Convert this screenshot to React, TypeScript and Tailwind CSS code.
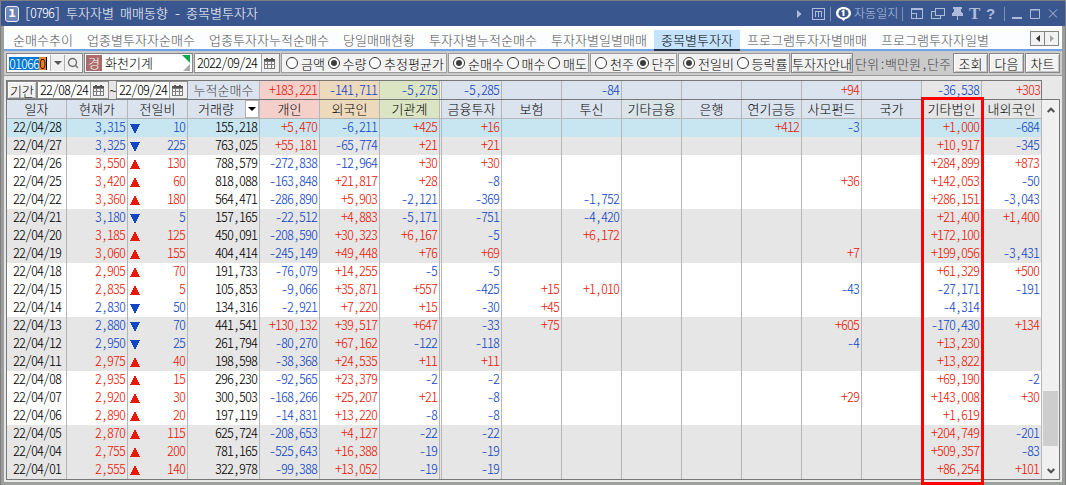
import type { ReactNode } from "react";
import clsx from "clsx";
import { Search } from "lucide-react";

type Row = {
  date: string;
  price: string;
  dir: "up" | "down";
  change: string;
  volume: string;
  flows: string[];
};

const TABS = [
  "순매수추이",
  "업종별투자자순매수",
  "업종투자자누적순매수",
  "당일매매현황",
  "투자자별누적순매수",
  "투자자별일별매매",
  "종목별투자자",
  "프로그램투자자별매매",
  "프로그램투자자일별",
];

const RADIO_GROUPS = [
  { name: "unit", width: "w-[166px]", options: ["금액", "수량", "추정평균가"], selected: "수량" },
  { name: "side", width: "w-[141px]", options: ["순매수", "매수", "매도"], selected: "순매수" },
  { name: "lot", width: "w-[87px]", options: ["천주", "단주"], selected: "단주" },
  { name: "diff", width: "w-[112px]", options: ["전일비", "등락률"], selected: "전일비" },
];

const INVESTORS = [
  { label: "개인", total: "+183,221", top: "bg-[#f5cfca]", head: "bg-[#f5cfca]" },
  { label: "외국인", total: "-141,711", top: "bg-[#eddabd]", head: "bg-[#eddabd]" },
  { label: "기관계", total: "-5,275", top: "bg-[#dbe5c4]", head: "bg-[#dbe5c4]" },
  { label: "금융투자", total: "-5,285", top: "bg-[#dbe3ee]", head: "bg-[#dbe3ee]" },
  { label: "보험", total: "", top: "bg-[#dbe3ee]", head: "bg-[#dbe3ee]" },
  { label: "투신", total: "-84", top: "bg-[#dbe3ee]", head: "bg-[#dbe3ee]" },
  { label: "기타금융", total: "", top: "bg-[#dbe3ee]", head: "bg-[#dae5ea]" },
  { label: "은행", total: "", top: "bg-[#dbe3ee]", head: "bg-[#dbe3ee]" },
  { label: "연기금등", total: "", top: "bg-[#dbe3ee]", head: "bg-[#dbe3ee]" },
  { label: "사모펀드", total: "+94", top: "bg-[#dbe3ee]", head: "bg-[#dbe3ee]" },
  { label: "국가", total: "", top: "bg-[#dbe3ee]", head: "bg-[#dbe3ee]" },
  { label: "기타법인", total: "-36,538", top: "bg-[#e6e6e6]", head: "bg-[#e6e6e6]" },
  { label: "내외국인", total: "+303", top: "bg-[#e6e6e6]", head: "bg-[#e6e6e6]" },
];

const ROWS: Row[] = [
  { date: "22/04/28", price: "3,315", dir: "down", change: "10", volume: "155,218", flows: ["+5,470", "-6,211", "+425", "+16", "", "", "", "", "+412", "-3", "", "+1,000", "-684"] },
  { date: "22/04/27", price: "3,325", dir: "down", change: "225", volume: "763,025", flows: ["+55,181", "-65,774", "+21", "+21", "", "", "", "", "", "", "", "+10,917", "-345"] },
  { date: "22/04/26", price: "3,550", dir: "up", change: "130", volume: "788,579", flows: ["-272,838", "-12,964", "+30", "+30", "", "", "", "", "", "", "", "+284,899", "+873"] },
  { date: "22/04/25", price: "3,420", dir: "up", change: "60", volume: "818,088", flows: ["-163,848", "+21,817", "+28", "-8", "", "", "", "", "", "+36", "", "+142,053", "-50"] },
  { date: "22/04/22", price: "3,360", dir: "up", change: "180", volume: "564,471", flows: ["-286,890", "+5,903", "-2,121", "-369", "", "-1,752", "", "", "", "", "", "+286,151", "-3,043"] },
  { date: "22/04/21", price: "3,180", dir: "down", change: "5", volume: "157,165", flows: ["-22,512", "+4,883", "-5,171", "-751", "", "-4,420", "", "", "", "", "", "+21,400", "+1,400"] },
  { date: "22/04/20", price: "3,185", dir: "up", change: "125", volume: "450,091", flows: ["-208,590", "+30,323", "+6,167", "-5", "", "+6,172", "", "", "", "", "", "+172,100", ""] },
  { date: "22/04/19", price: "3,060", dir: "up", change: "155", volume: "404,414", flows: ["-245,149", "+49,448", "+76", "+69", "", "", "", "", "", "+7", "", "+199,056", "-3,431"] },
  { date: "22/04/18", price: "2,905", dir: "up", change: "70", volume: "191,733", flows: ["-76,079", "+14,255", "-5", "-5", "", "", "", "", "", "", "", "+61,329", "+500"] },
  { date: "22/04/15", price: "2,835", dir: "up", change: "5", volume: "105,853", flows: ["-9,066", "+35,871", "+557", "-425", "+15", "+1,010", "", "", "", "-43", "", "-27,171", "-191"] },
  { date: "22/04/14", price: "2,830", dir: "down", change: "50", volume: "134,316", flows: ["-2,921", "+7,220", "+15", "-30", "+45", "", "", "", "", "", "", "-4,314", ""] },
  { date: "22/04/13", price: "2,880", dir: "down", change: "70", volume: "441,541", flows: ["+130,132", "+39,517", "+647", "-33", "+75", "", "", "", "", "+605", "", "-170,430", "+134"] },
  { date: "22/04/12", price: "2,950", dir: "down", change: "25", volume: "261,794", flows: ["-80,270", "+67,162", "-122", "-118", "", "", "", "", "", "-4", "", "+13,230", ""] },
  { date: "22/04/11", price: "2,975", dir: "up", change: "40", volume: "198,598", flows: ["-38,368", "+24,535", "+11", "+11", "", "", "", "", "", "", "", "+13,822", ""] },
  { date: "22/04/08", price: "2,935", dir: "up", change: "15", volume: "296,230", flows: ["-92,565", "+23,379", "-2", "-2", "", "", "", "", "", "", "", "+69,190", "-2"] },
  { date: "22/04/07", price: "2,920", dir: "up", change: "30", volume: "300,503", flows: ["-168,266", "+25,207", "+21", "-8", "", "", "", "", "", "+29", "", "+143,008", "+30"] },
  { date: "22/04/06", price: "2,890", dir: "up", change: "20", volume: "197,119", flows: ["-14,831", "+13,220", "-8", "-8", "", "", "", "", "", "", "", "+1,619", ""] },
  { date: "22/04/05", price: "2,870", dir: "up", change: "115", volume: "625,724", flows: ["-208,653", "+4,127", "-22", "-22", "", "", "", "", "", "", "", "+204,749", "-201"] },
  { date: "22/04/04", price: "2,755", dir: "up", change: "200", volume: "781,165", flows: ["-525,643", "+16,388", "-19", "-19", "", "", "", "", "", "", "", "+509,357", "-83"] },
  { date: "22/04/01", price: "2,555", dir: "up", change: "140", volume: "322,978", flows: ["-99,388", "+13,052", "-19", "-19", "", "", "", "", "", "", "", "+86,254", "+101"] },
];

function signColor(value: string) {
  return value.startsWith("-") ? "text-[#1246c4]" : "text-[#e8190a]";
}

function rowColor(i: number) {
  if (i === 0) return "bg-[#c8e6f2]";
  return Math.floor((i + 1) / 3) % 2 === 0 ? "bg-[#e6e6e6]" : "bg-white";
}

// half-width figures, 6px per character
function Num({ children, className }: { children: ReactNode; className?: string }) {
  return (
    <span className={clsx("text-[14px] leading-[17px] tracking-[-1px] whitespace-pre [font-feature-settings:'hwid']", className)}>
      {children}
    </span>
  );
}

function Cell({ children, className }: { children?: ReactNode; className?: string }) {
  return (
    <div className={clsx("flex shrink-0 items-center border-r border-[#b6b6b6]", className)}>
      {children}
    </div>
  );
}

function Calendar() {
  return (
    <svg className="mr-0.5" width="11" height="11" viewBox="0 0 11 11" shapeRendering="crispEdges">
      <path d="M0 1h11v10H0z" fill="#7c7c7c" />
      <path d="M0 1h11v2H0zM2 0h2v2H2zM7 0h2v2H7z" fill="#555" />
      <path d="M1 4h2v2H1zM4 4h3v2H4zM8 4h2v2H8zM1 7h2v3H1zM4 7h3v3H4zM8 7h2v3H8z" fill="#f4f4f4" />
    </svg>
  );
}

function DateBox({ value, className }: { value: string; className: string }) {
  return (
    <div className={clsx("flex border border-[#8c8c8c] bg-white", className)}>
      <div className="flex flex-1 items-center pl-0.5">
        <Num className="pb-0.5">{value}</Num>
      </div>
      <button className="flex w-[18px] items-center justify-center border-l border-[#a0a0a0] bg-[#f0f0f0]">
        <Calendar />
      </button>
    </div>
  );
}

function Radio({ label, checked }: { label: string; checked: boolean }) {
  return (
    <label className="flex items-center gap-[3px] whitespace-nowrap">
      <span className="flex size-3 items-center justify-center rounded-full border border-[#333] bg-white">
        {checked && <span className="size-1.5 rounded-full bg-[#3c3c3c]" />}
      </span>
      {label}
    </label>
  );
}

function ToolButton({ children, className }: { children: ReactNode; className: string }) {
  return (
    <button className={clsx("flex items-center justify-center border border-[#868686] bg-[#f2f2f2] whitespace-nowrap shadow-[inset_1px_1px_0_#fff,inset_-1px_-1px_0_#c4c4c4]", className)}>
      {children}
    </button>
  );
}

function TitleBar() {
  return (
    <div className="flex h-[25px] items-center bg-[#3a568f] pl-1 text-white">
      <span className="flex h-4 w-3.5 items-center justify-center rounded-[3px] border border-[#eef2fa] bg-[#7085b9] font-['DejaVu_Sans'] text-[11px] leading-none font-bold">
        1
      </span>
      <div className="ml-[5px] flex gap-1.5 pb-0.5">
        <Num>[0796]</Num>
        <span>투자자별</span>
        <span>매매동향</span>
        <Num>-</Num>
        <span>종목별투자자</span>
      </div>
      <svg className="ml-auto" width="5" height="8" viewBox="0 0 5 8">
        <path d="M0 0l4.5 4L0 8z" fill="#aebcdb" />
      </svg>
      <svg className="ml-2.5" width="13" height="12" viewBox="0 0 13 12" fill="none" stroke="#aebcdb" shapeRendering="crispEdges">
        <path d="M.5.5h12v11H.5zM3.5 9V3.5h6V9M6.5 4v5" />
      </svg>
      <span className="ml-[5px] h-3.5 w-px bg-[#8290b0]" />
      <svg className="ml-[5px]" width="15" height="14" viewBox="0 0 15 14">
        <path d="M7.5 0C3.400 0 0 2.600 0 6s2.500 5.500 5.500 6l2 2 2-2C12.500 11.500 15 9.400 15 6S11.600 0 7.500 0z" fill="#fff" />
        <ellipse cx="7.500" cy="6.200" rx="5" ry="4.300" fill="#3a568f" />
        <path d="M5.500 4l2-1.500H8.500V9h-2V5h-1z" fill="#fff" />
      </svg>
      <span className="ml-[3px] w-[43px] pb-0.5 text-[12px] whitespace-nowrap text-[#b8c5e2]">자동일지</span>
      <span className="ml-[5px] h-3.5 w-px bg-[#8290b0]" />
      <svg className="ml-2" width="12" height="11" viewBox="0 0 12 11" fill="none" stroke="#aebcdb" shapeRendering="crispEdges">
        <path d="M.5 5V.5h11v10H6" />
        <path d="M.5 5.500h5v5h-5z" />
        <path d="M0 1h12" strokeWidth="2" />
      </svg>
      <svg className="ml-2" width="14" height="12" viewBox="0 0 14 12" fill="none" stroke="#aebcdb" shapeRendering="crispEdges">
        <path d="M4.500.5h9v7h-9zM4 3.500H.5v7h9V8" />
      </svg>
      <svg className="ml-[7px]" width="11" height="13" viewBox="0 0 11 13" fill="#aebcdb" shapeRendering="crispEdges">
        <path d="M1 0h9v2H9v3h1v1h1v3H6v4H5V9H0V6h1V5h1V2H1z" />
      </svg>
      <span className="ml-[6px] w-[11px] text-center font-['Liberation_Serif'] text-[17px] leading-none font-bold text-[#aebcdb]">T</span>
      <span className="ml-[6px] w-[9px] text-center font-['Liberation_Sans'] text-[15px] leading-none font-bold text-[#aebcdb]">?</span>
      <span className="ml-[9px] h-3.5 w-px bg-[#8290b0]" />
      <svg className="ml-[7px] mr-1.5" width="47" height="11" viewBox="0 0 47 11" fill="none" stroke="#aebcdb">
        <path d="M0 10h10" strokeWidth="2" />
        <path d="M18.500 1.500h9v9h-9zM18 2h10" />
        <path d="M37 1.500l8 8M45 1.500l-8 8" />
      </svg>
    </div>
  );
}

function Toolbar() {
  return (
    <div className="flex h-[25px] items-start border-b border-[#9a9a9a] bg-[#cbcbcb] pt-0.5 pl-0.5">
      <div className="flex h-5 w-[77px] border border-[#868686] bg-white p-px">
        <div className="flex w-[42px] items-center pl-px">
          <Num className="h-[13px] bg-[#0078d7] leading-[13px]! text-white">01066</Num>
          <Num className="h-[13px] w-2 border-r border-black bg-[#f58220] leading-[13px]! text-black">0</Num>
        </div>
        <button className="flex w-[14px] items-center justify-center border-l border-[#b0b0b0] bg-[#f0f0f0]">
          <svg width="8" height="4" viewBox="0 0 8 4"><path d="M0 0h8L4 4z" fill="#555" /></svg>
        </button>
        <button className="flex w-[17px] items-center justify-center border-l border-[#b0b0b0] bg-[#f0f0f0]">
          <Search size={12} strokeWidth={2.8} color="#707070" />
        </button>
      </div>
      <div className="relative ml-px flex h-5 w-[109px] items-center border border-[#868686] bg-white pl-px">
        <span className="flex size-4 items-center justify-center bg-[#ab6b6b] pb-0.5 text-white">경</span>
        <span className="ml-[3px] pb-0.5">화천기계</span>
        <svg className="absolute top-px right-0.5" width="8" height="16" viewBox="0 0 8 16">
          <path d="M0 0h8v8z" fill="#12a84e" />
          <path d="M8 9v7H1z" fill="#aaa" />
        </svg>
      </div>
      <DateBox value="2022/09/24" className="ml-px h-5 w-[86px]" />
      {RADIO_GROUPS.map((g) => (
        <div key={g.name} className={clsx("ml-px flex h-5 items-center gap-[2.5px] border border-[#9c9c9c] bg-[#f2f2f2] pl-1", g.width)}>
          {g.options.map((o) => (
            <Radio key={o} label={o} checked={o === g.selected} />
          ))}
        </div>
      ))}
      <ToolButton className="ml-px h-5 w-[62px]">투자자안내</ToolButton>
      <span className="ml-0.5 flex h-5 w-[98px] items-center whitespace-nowrap text-[#444]">
        단위<Num className="w-1.5 text-center">:</Num>백만원<Num className="w-1.5 text-center">,</Num>단주
      </span>
      <ToolButton className="h-5 w-[35px]">조회</ToolButton>
      <ToolButton className="ml-px h-5 w-[35px]">다음</ToolButton>
      <ToolButton className="ml-px h-5 w-[35px]">차트</ToolButton>
    </div>
  );
}

function SummaryRow() {
  return (
    <div className="flex h-[19px] w-[1036px] border-t border-r border-l border-[#777]">
      <div className="flex w-[181px] shrink-0 items-stretch bg-[#e6e6e6]">
        <ToolButton className="w-[30px]">기간</ToolButton>
        <DateBox value="22/08/24" className="w-[72px]" />
        <span className="flex w-[7px] items-center justify-center"><Num>~</Num></span>
        <DateBox value="22/09/24" className="w-[72px]" />
      </div>
      <Cell className="w-[72px] justify-center bg-[#dbe3ee] pb-0.5 text-[#444]">누적순매수</Cell>
      {INVESTORS.map((c, i) => (
        <div key={c.label} className="flex shrink-0">
          <Cell className={clsx("justify-end", i === 12 ? "w-[59px] border-r-0 pr-px" : "w-[60px] pr-0.5", c.top)}>
            <Num className={clsx("pb-0.5", signColor(c.total))}>{c.total}</Num>
          </Cell>
          {i === 2 && <Cell className="w-0.5 bg-[#f2f2f2]" />}
        </div>
      ))}
    </div>
  );
}

function HeaderRow() {
  return (
    <div className="flex h-[19px] border-b border-[#b6b6b6]">
      <Cell className="w-[60px] justify-center bg-[#dbe3ee] pb-0.5">일자</Cell>
      <Cell className="w-[61px] justify-center bg-[#dbe3ee] pb-0.5">현재가</Cell>
      <Cell className="w-[60px] justify-center bg-[#dbe3ee] pb-0.5">전일비</Cell>
      <Cell className="w-[72px] bg-[#dbe3ee] pl-[10px]">
        <span className="w-9 pb-0.5 whitespace-nowrap">거래량</span>
        <span className="ml-auto flex h-full w-[14px] items-center justify-center border border-[#b0b0b0] bg-white">
          <svg width="8" height="4" viewBox="0 0 8 4"><path d="M0 0h8L4 4z" fill="#000" /></svg>
        </span>
      </Cell>
      {INVESTORS.map((c, i) => (
        <div key={c.label} className="flex shrink-0">
          <Cell className={clsx("w-[60px] justify-center pb-0.5 whitespace-nowrap", c.head)}>{c.label}</Cell>
          {i === 2 && <Cell className="w-0.5 bg-[#f2f2f2]" />}
        </div>
      ))}
    </div>
  );
}

function DataRow({ row, index }: { row: Row; index: number }) {
  const tone = row.dir === "up" ? "text-[#e8190a]" : "text-[#1246c4]";
  return (
    <div className={clsx("flex h-[18px]", rowColor(index))}>
      <Cell className="w-[60px] pl-1.5"><Num className="pb-1">{row.date}</Num></Cell>
      <Cell className={clsx("w-[61px] justify-end pr-0.5", tone)}><Num className="pb-1">{row.price}</Num></Cell>
      <Cell className={clsx("w-[60px] justify-between pr-0.5 pl-0.5", tone)}>
        <svg width="10" height="9" viewBox="0 0 10 9" fill="currentColor" shapeRendering="crispEdges">
          <path d={row.dir === "up" ? "M4 0h2v2h1v2h1v2h1v2h1v1H0V8h1V6h1V4h1V2h1z" : "M0 0h10v1H9v2H8v2H7v2H6v2H4V7H3V5H2V3H1V1H0z"} />
        </svg>
        <Num className="pb-1">{row.change}</Num>
      </Cell>
      <Cell className="w-[72px] justify-end pr-0.5"><Num className="pb-1">{row.volume}</Num></Cell>
      {row.flows.map((v, i) => (
        <div key={i} className="flex shrink-0">
          <Cell className="w-[60px] justify-end pr-0.5">
            <Num className={clsx("pb-1", signColor(v))}>{v}</Num>
          </Cell>
          {i === 2 && <Cell className="w-0.5" />}
        </div>
      ))}
    </div>
  );
}

function Scrollbar() {
  return (
    <div className="flex flex-1 flex-col items-center bg-[#f0f0f0]">
      <svg className="mt-[7px]" width="8" height="6" viewBox="0 0 8 6" fill="none" stroke="#505050" strokeWidth="2">
        <path d="M.7 5L4 1.700 7.300 5" />
      </svg>
      <div className="mt-[278px] h-[55px] w-[15px] bg-[#cdcdcd]" />
      <svg className="mt-[22px]" width="8" height="6" viewBox="0 0 8 6" fill="none" stroke="#505050" strokeWidth="2">
        <path d="M.7 1L4 4.300 7.300 1" />
      </svg>
    </div>
  );
}

export default function App() {
  return (
    <div className="relative h-[485px] w-[1066px] overflow-hidden border border-b-0 border-[#7f7f7f] bg-[#9c9e9c] font-['Noto_Sans_CJK_KR',sans-serif] text-[13px] leading-[17px] font-light tracking-[0.04px] text-black">
      <TitleBar />
      <div className="mr-[3px] ml-[3px] h-[456px] bg-[#e8e8e8]">
        <div className="flex h-[25px] items-end border-b-2 border-[#6fa3e6] bg-[#fcfdff] pl-0.5">
          {TABS.map((t) => (
            <div
              key={t}
              className={clsx(
                "-mb-0.5 flex h-[21px] items-center px-[7px] whitespace-nowrap",
                t === "종목별투자자" ? "border-b-2 border-[#26344f] bg-[#c5e3ff] pb-px" : "pb-[3px] text-[#505050]"
              )}
            >
              {t}
            </div>
          ))}
          <div className="mr-[3px] mb-[3px] ml-auto flex h-[15px] w-[29px] border border-[#858585] bg-[#f2f2f2]">
            <span className="flex flex-1 items-center justify-center border-r border-[#858585]">
              <svg width="4" height="7" viewBox="0 0 4 7"><path d="M4 0v7L0 3.500z" fill="#333" /></svg>
            </span>
            <span className="flex flex-1 items-center justify-center">
              <svg width="4" height="7" viewBox="0 0 4 7"><path d="M0 0v7l4-3.500z" fill="#a5a5a5" /></svg>
            </span>
          </div>
        </div>
        <Toolbar />
        <div className="mt-1 ml-0.5 w-[1054px]">
          <SummaryRow />
          <div className="flex border border-[#777]">
            <div className="w-[1035px] shrink-0">
              <HeaderRow />
              {ROWS.map((r, i) => (
                <DataRow key={r.date} row={r} index={i} />
              ))}
            </div>
            <Scrollbar />
          </div>
        </div>
      </div>
      {/* highlight around 기타법인 */}
      <div className="pointer-events-none absolute top-24 left-[920px] h-[388px] w-[63px] border-3 border-[#ff0000]" />
    </div>
  );
}
